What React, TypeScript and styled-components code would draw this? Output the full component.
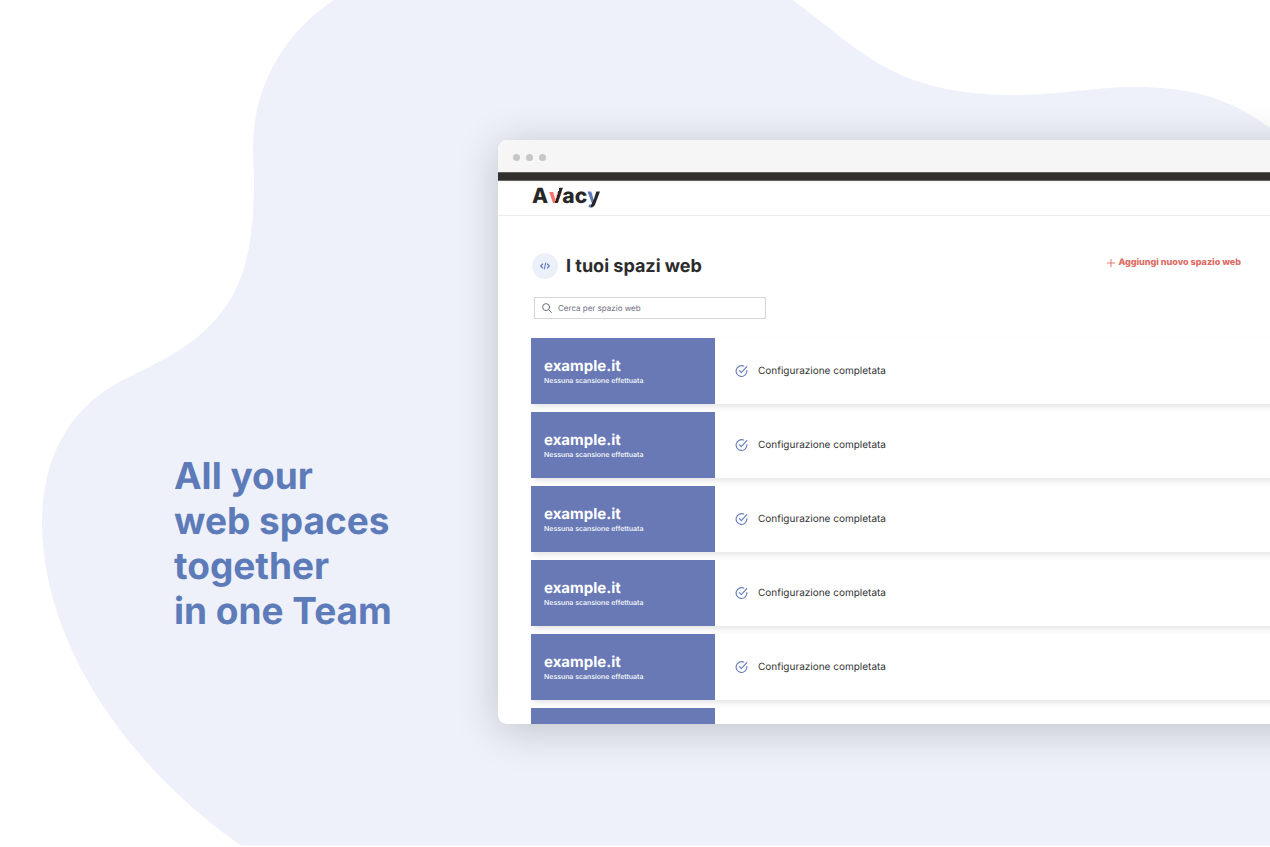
import React from "react";
import styled, { createGlobalStyle } from "styled-components";

const GlobalStyle = createGlobalStyle`
  *, *::before, *::after { box-sizing: border-box; }
  body {
    margin: 0;
    background: #fff;
    font-family: Inter, "Liberation Sans", sans-serif;
    text-rendering: geometricPrecision;
  }
  button, input { text-rendering: inherit; }
  h1, h2, h3, p, ul { margin: 0; padding: 0; }
`;

const Page = styled.main`
  position: relative;
  display: flex;
  height: 100vh;
  min-height: 640px;
  padding: 140px 0 123px 174px;
  overflow: hidden;
`;

const Backdrop = styled.svg`
  position: absolute;
  inset: 0;
  width: 100%;
  height: 100%;
`;

const Headline = styled.h1`
  position: relative;
  flex: 0 0 324px;
  align-self: flex-end;
  padding-bottom: 91px;
  color: #5d7ab9;
  font-size: 37px;
  font-weight: 700;
  line-height: 45px;
`;

const Line = styled.span`
  display: block;
`;

const Browser = styled.section`
  position: relative;
  flex: 1;
  min-width: 0;
  display: flex;
  flex-direction: column;
  overflow: hidden;
  margin-right: -80px;
  background: #fff;
  border-radius: 9px;
  box-shadow: 0 6px 44px rgba(0, 0, 0, 0.2);
`;

const TitleBar = styled.div`
  flex: none;
  display: flex;
  align-items: center;
  gap: 6px;
  height: 32px;
  padding: 3px 15px 0;
  background: #f6f6f6;
`;

const Dot = styled.span`
  width: 7px;
  height: 7px;
  border-radius: 50%;
  background: #c7c7c7;
`;

const Strip = styled.div`
  flex: none;
  height: 9px;
  background: #302f2e;
  border: solid #626261;
  border-width: 1px 0;
`;

const Header = styled.header`
  flex: none;
  display: flex;
  align-items: center;
  height: 35px;
  padding: 0 34px 2px;
  border-bottom: 1px solid #ececec;
  background: linear-gradient(#f8f8f8, #fff 4px);
`;

const Logo = styled.a`
  display: flex;
  color: #272727;
  font-size: 21px;
  font-weight: 800;
  line-height: 26px;
  text-decoration: none;
`;

const LogoV = styled.span`
  margin: 0 -1px;
  color: transparent;
  background:
    linear-gradient(108deg, transparent 57%, #272727 57%),
    linear-gradient(transparent 8px, #f8736b 8px);
  background-clip: text;
  -webkit-background-clip: text;
`;

const LogoY = styled.span`
  color: transparent;
  background: linear-gradient(110deg, #5d7ab9 53%, #272727 53%);
  background-clip: text;
  -webkit-background-clip: text;
`;

const Content = styled.div`
  flex: 1;
  min-height: 0;
  padding: 37px 0 0 34px;
`;

const TitleRow = styled.div`
  display: flex;
  align-items: flex-start;
  justify-content: space-between;
  padding-right: 109px;
`;

const TitleGroup = styled.div`
  display: flex;
  align-items: center;
  gap: 8px;
`;

const Badge = styled.span`
  display: grid;
  place-items: center;
  width: 26px;
  height: 26px;
  border-radius: 50%;
  background: #ecf0f9;
`;

const Title = styled.h2`
  padding-top: 2px;
  color: #2c2c2c;
  font-size: 18px;
  font-weight: 700;
  line-height: 24px;
`;

const AddButton = styled.button`
  display: flex;
  align-items: center;
  gap: 3px;
  padding: 3px 0;
  border: 0;
  background: none;
  color: #dd6b63;
  font: 800 9px/14px Inter, "Liberation Sans", sans-serif;
`;

const Search = styled.label`
  display: flex;
  align-items: center;
  gap: 6px;
  width: 232px;
  height: 22px;
  margin: 18px 0 19px 2px;
  padding: 0 7px;
  border: 1px solid #d5d6d7;
`;

const SearchInput = styled.input`
  flex: 1;
  min-width: 0;
  padding: 0;
  border: 0;
  outline: 0;
  background: none;
  font: 400 8px/12px Inter, "Liberation Sans", sans-serif;
  &::placeholder { color: #6d7080; opacity: 1; }
`;

const List = styled.ul`
  display: grid;
  gap: 8px;
  margin-left: -1px;
  list-style: none;
`;

const Card = styled.li`
  display: flex;
  height: 66px;
  background: #fff;
  box-shadow: 3px 3px 5px rgba(0, 0, 0, 0.1);
`;

const Site = styled.div`
  flex: 0 0 184px;
  padding: 18px 13px 0;
  background: #6879b6;
  color: #fff;
`;

const SiteName = styled.h3`
  font-size: 15px;
  font-weight: 700;
  line-height: 19px;
`;

const ScanNote = styled.p`
  font-size: 7px;
  font-weight: 500;
  line-height: 11px;
`;

const Status = styled.p`
  display: flex;
  align-items: center;
  gap: 10px;
  padding-left: 20px;
  color: #333;
  font-size: 10px;
  line-height: 14px;
`;

const CheckIcon = () => (
  <svg width="13" height="13" viewBox="0 0 13 13" fill="none" stroke="#6178bd" strokeWidth="1.1" strokeLinecap="round" strokeLinejoin="round" aria-hidden="true">
    <path d="M11.9 5.5V6A5.4 5.4 0 1 1 8.7 1.1" />
    <path d="M4.3 5.7 6.3 7.6 11.8 1.7" />
  </svg>
);

const CodeIcon = () => (
  <svg width="10" height="8" viewBox="0 0 10 8" fill="none" stroke="#6178bd" strokeWidth="1.1" strokeLinecap="round" strokeLinejoin="round" aria-hidden="true">
    <path d="M2.6 2 .7 4l1.9 2M7.4 2l1.9 2-1.9 2M5.7 1 4.3 7" />
  </svg>
);

const SearchIcon = () => (
  <svg width="10" height="10" viewBox="0 0 10 10" fill="none" stroke="#6d7080" strokeWidth="1" strokeLinecap="round" aria-hidden="true">
    <circle cx="4.1" cy="4.1" r="3.5" />
    <path d="m6.7 6.7 2.8 2.8" />
  </svg>
);

const PlusIcon = () => (
  <svg width="8" height="8" viewBox="0 0 8 8" stroke="#dd6b63" strokeWidth="0.9" aria-hidden="true">
    <path d="M4 0v8M0 4h8" />
  </svg>
);

const headline = ["All your", "web spaces", "together", "in one Team"];
const sites = Array.from({ length: 5 }, (_, id) => ({
  id,
  name: "example.it",
  note: "Nessuna scansione effettuata",
  status: "Configurazione completata",
}));

export default function App() {
  return (
    <>
      <GlobalStyle />
      <Page>
        <Backdrop viewBox="0 0 1270 847" preserveAspectRatio="xMinYMin slice" aria-hidden="true">
          <path
            fill="#eef1f9"
            d="M334 0C282 34 254 88 253 145C253 165 254 172 254 180C254 240 246 283 220 314C193 348 158 362 123 380C72 406 42 455 42 522C42 640 124 764 241 845.5H1270V128C1228 96 1185 87 1135 87C1095 87 1060 95 1013 95C895 95 860 50 793 0Z"
          />
        </Backdrop>
        <Headline>
          {headline.map((line) => (
            <Line key={line}>{line}</Line>
          ))}
        </Headline>
        <Browser>
          <TitleBar>
            <Dot />
            <Dot />
            <Dot />
          </TitleBar>
          <Strip />
          <Header>
            <Logo href="#" aria-label="Avacy">
              A<LogoV>V</LogoV>ac<LogoY>y</LogoY>
            </Logo>
          </Header>
          <Content>
            <TitleRow>
              <TitleGroup>
                <Badge>
                  <CodeIcon />
                </Badge>
                <Title>I tuoi spazi web</Title>
              </TitleGroup>
              <AddButton type="button">
                <PlusIcon />
                Aggiungi nuovo spazio web
              </AddButton>
            </TitleRow>
            <Search>
              <SearchIcon />
              <SearchInput type="search" aria-label="Cerca per spazio web" placeholder="Cerca per spazio web" />
            </Search>
            <List>
              {sites.map((site) => (
                <Card key={site.id}>
                  <Site>
                    <SiteName>{site.name}</SiteName>
                    <ScanNote>{site.note}</ScanNote>
                  </Site>
                  <Status>
                    <CheckIcon />
                    {site.status}
                  </Status>
                </Card>
              ))}
              <Card aria-hidden="true">
                <Site />
              </Card>
            </List>
          </Content>
        </Browser>
      </Page>
    </>
  );
}
